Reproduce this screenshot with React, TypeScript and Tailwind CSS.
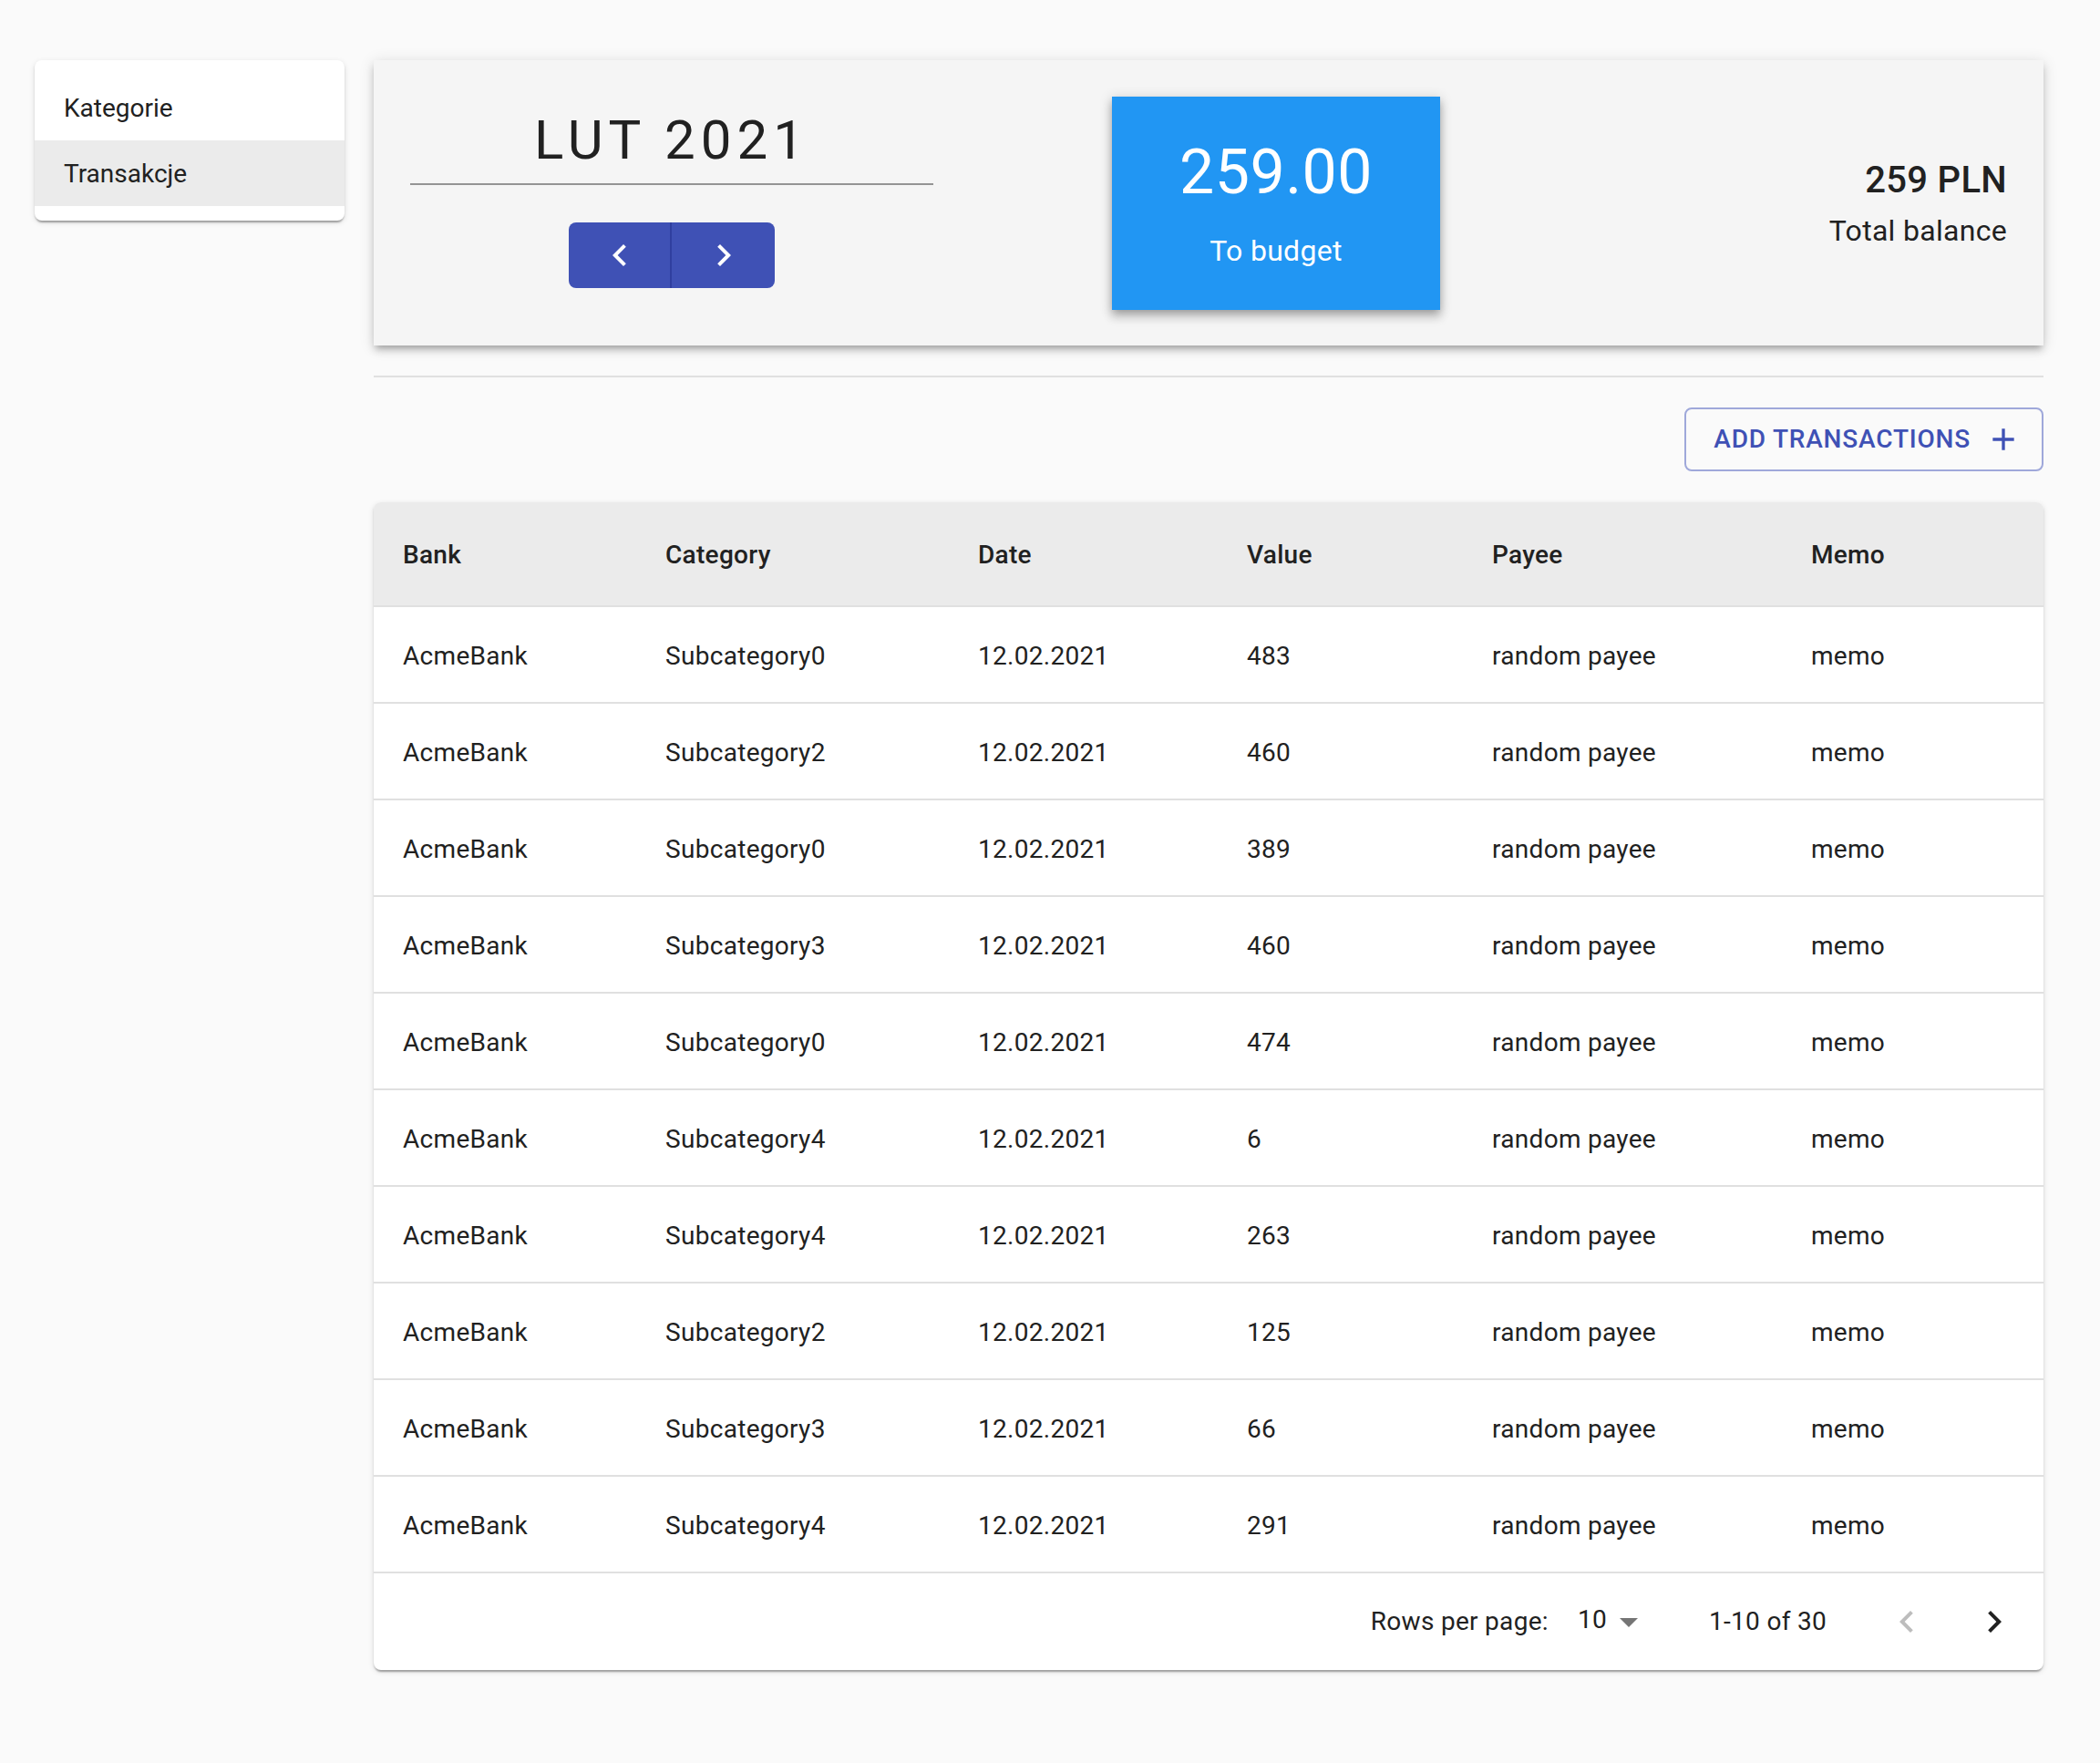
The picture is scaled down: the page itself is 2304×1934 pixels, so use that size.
import React from 'react';

// Budget overview page – month picker, "to budget" tile, transactions table

type Row = {
  bank: string;
  category: string;
  date: string;
  value: number;
  payee: string;
  memo: string;
};

const rows: Row[] = [
  { bank: 'AcmeBank', category: 'Subcategory0', date: '12.02.2021', value: 483, payee: 'random payee', memo: 'memo' },
  { bank: 'AcmeBank', category: 'Subcategory2', date: '12.02.2021', value: 460, payee: 'random payee', memo: 'memo' },
  { bank: 'AcmeBank', category: 'Subcategory0', date: '12.02.2021', value: 389, payee: 'random payee', memo: 'memo' },
  { bank: 'AcmeBank', category: 'Subcategory3', date: '12.02.2021', value: 460, payee: 'random payee', memo: 'memo' },
  { bank: 'AcmeBank', category: 'Subcategory0', date: '12.02.2021', value: 474, payee: 'random payee', memo: 'memo' },
  { bank: 'AcmeBank', category: 'Subcategory4', date: '12.02.2021', value: 6, payee: 'random payee', memo: 'memo' },
  { bank: 'AcmeBank', category: 'Subcategory4', date: '12.02.2021', value: 263, payee: 'random payee', memo: 'memo' },
  { bank: 'AcmeBank', category: 'Subcategory2', date: '12.02.2021', value: 125, payee: 'random payee', memo: 'memo' },
  { bank: 'AcmeBank', category: 'Subcategory3', date: '12.02.2021', value: 66, payee: 'random payee', memo: 'memo' },
  { bank: 'AcmeBank', category: 'Subcategory4', date: '12.02.2021', value: 291, payee: 'random payee', memo: 'memo' },
];

const columns = [
  { label: 'Bank', width: 'w-[288px]' },
  { label: 'Category', width: 'w-[343px]' },
  { label: 'Date', width: 'w-[295px]' },
  { label: 'Value', width: 'w-[269px]' },
  { label: 'Payee', width: 'w-[350px]' },
  { label: 'Memo', width: '' },
];

const ChevronLeft = ({ className }: { className?: string }) => (
  <svg viewBox="0 0 24 24" className={className} fill="currentColor">
    <path d="M15.41 7.41L14 6l-6 6 6 6 1.41-1.41L10.83 12z" />
  </svg>
);

const ChevronRight = ({ className }: { className?: string }) => (
  <svg viewBox="0 0 24 24" className={className} fill="currentColor">
    <path d="M10 6L8.59 7.41 13.17 12l-4.58 4.59L10 18l6-6z" />
  </svg>
);

const PlusIcon = ({ className }: { className?: string }) => (
  <svg viewBox="0 0 24 24" className={className} fill="currentColor">
    <path d="M19 13h-6v6h-2v-6H5v-2h6V5h2v6h6v2z" />
  </svg>
);

const ArrowDropDown = ({ className }: { className?: string }) => (
  <svg viewBox="0 0 24 24" className={className} fill="currentColor">
    <path d="M7 10l5 5 5-5z" />
  </svg>
);

const Sidebar = () => (
  <nav className="w-[340px] shrink-0 rounded-[8px] bg-white py-[16px] shadow-[0px_4px_2px_-2px_rgba(0,0,0,0.2),0px_2px_2px_0px_rgba(0,0,0,0.14),0px_2px_6px_0px_rgba(0,0,0,0.12)]">
    <div className="flex h-[72px] items-center px-[32px] pt-[2px] text-[28px] text-[#212121]">Kategorie</div>
    <div className="flex h-[72px] items-center bg-[#ebebeb] px-[32px] pt-[2px] text-[28px] text-[#212121]">Transakcje</div>
  </nav>
);

const BudgetHeader = () => (
  <div className="flex h-[313px] bg-[#f5f5f5] px-[40px] pt-[40px] pb-[39px] shadow-[0px_6px_6px_-4px_rgba(0,0,0,0.2),0px_6px_8px_0px_rgba(0,0,0,0.14),0px_2px_16px_0px_rgba(0,0,0,0.12)]">
    {/* month picker */}
    <div className="flex w-[574px] flex-col items-center">
      <div className="w-full border-b-2 border-[#949494] py-[12px] text-center text-[60px] leading-[71px] tracking-[6px] text-[#212121]">
        LUT 2021
      </div>
      <div className="mt-[41px] flex h-[72px] overflow-hidden rounded-[8px] bg-[#3f51b5] text-white">
        <button className="flex w-[113px] items-center justify-center border-r-2 border-[#303f9f]">
          <ChevronLeft className="h-[48px] w-[48px]" />
        </button>
        <button className="flex w-[113px] items-center justify-center">
          <ChevronRight className="h-[48px] w-[48px]" />
        </button>
      </div>
    </div>

    {/* to budget tile */}
    <div className="ml-[196px] flex h-[234px] w-[360px] shrink-0 flex-col items-center justify-center gap-[20px] bg-[#2196f3] text-white shadow-[0px_4px_8px_-2px_rgba(0,0,0,0.2),0px_8px_10px_1px_rgba(0,0,0,0.14),0px_2px_12px_2px_rgba(0,0,0,0.12)]">
      <div className="text-[68px] leading-[84px] tracking-[0.5px]">259.00</div>
      <div className="text-[32px] leading-[48px] tracking-[0.3px]">To budget</div>
    </div>

    {/* total balance */}
    <div className="flex flex-1 flex-col items-end justify-center text-[#212121]">
      <div className="text-[40px] font-medium leading-[58px] tracking-[0.3px]">259 PLN</div>
      <div className="mt-[2px] text-[32px] leading-[48px] tracking-[0.3px]">Total balance</div>
    </div>
  </div>
);

const TransactionsTable = () => (
  <div className="mt-[34px] overflow-hidden rounded-[8px] bg-white shadow-[0px_4px_2px_-2px_rgba(0,0,0,0.2),0px_2px_2px_0px_rgba(0,0,0,0.14),0px_2px_6px_0px_rgba(0,0,0,0.12)]">
    <table className="w-full table-fixed border-collapse text-left text-[28px] text-[#212121]">
      <thead className="bg-[#ebebeb]">
        <tr className="h-[114px] border-b-2 border-[#e0e0e0]">
          {columns.map((col) => (
            <th key={col.label} className={`${col.width} pl-[32px] pt-[2px] font-medium tracking-[0.3px]`}>
              {col.label}
            </th>
          ))}
        </tr>
      </thead>
      <tbody>
        {rows.map((row, i) => (
          <tr key={i} className="h-[106px] border-b-2 border-[#e0e0e0]">
            <td className="pl-[32px] pt-[3px] tracking-[0.3px]">{row.bank}</td>
            <td className="pl-[32px] pt-[3px] tracking-[0.3px]">{row.category}</td>
            <td className="pl-[32px] pt-[3px] tracking-[0.3px]">{row.date}</td>
            <td className="pl-[32px] pt-[3px] tracking-[0.3px]">{row.value}</td>
            <td className="pl-[32px] pt-[3px] tracking-[0.3px]">{row.payee}</td>
            <td className="pl-[32px] pt-[3px] tracking-[0.3px]">{row.memo}</td>
          </tr>
        ))}
      </tbody>
    </table>

    {/* pagination */}
    <div className="flex h-[106px] items-center justify-end pr-[6px] text-[28px] text-[#212121]">
      <span className="tracking-[0.3px]">Rows per page:</span>
      <div className="relative ml-[16px] mr-[64px] flex items-center pl-[16px] pr-[48px]">
        <span className="-mt-[4px] tracking-[0.3px]">10</span>
        <ArrowDropDown className="absolute right-0 top-1/2 h-[48px] w-[48px] -translate-y-1/2 text-[#757575]" />
      </div>
      <span className="tracking-[0.3px]">1-10 of 30</span>
      <div className="ml-[40px] flex">
        <button className="flex h-[96px] w-[96px] items-center justify-center text-[#bdbdbd]">
          <ChevronLeft className="h-[48px] w-[48px]" />
        </button>
        <button className="flex h-[96px] w-[96px] items-center justify-center text-[#212121]">
          <ChevronRight className="h-[48px] w-[48px]" />
        </button>
      </div>
    </div>
  </div>
);

export default function App() {
  return (
    <div className="flex min-h-[1934px] items-start gap-[32px] bg-[#fafafa] pl-[38px] pt-[66px] font-['Roboto',sans-serif]">
      <Sidebar />
      <main className="flex w-[1832px] flex-col">
        <BudgetHeader />
        <div className="mt-[33px] h-[2px] bg-[#e0e0e0]" />
        <div className="mt-[33px] flex justify-end">
          <button className="flex h-[70px] items-center rounded-[8px] border-2 border-[#9fa8da] pl-[30px] pr-[22px] text-[28px] font-medium uppercase tracking-[0.8px] text-[#3f51b5]">
            Add transactions
            <PlusIcon className="ml-[16px] h-[40px] w-[40px]" />
          </button>
        </div>
        <TransactionsTable />
      </main>
    </div>
  );
}
